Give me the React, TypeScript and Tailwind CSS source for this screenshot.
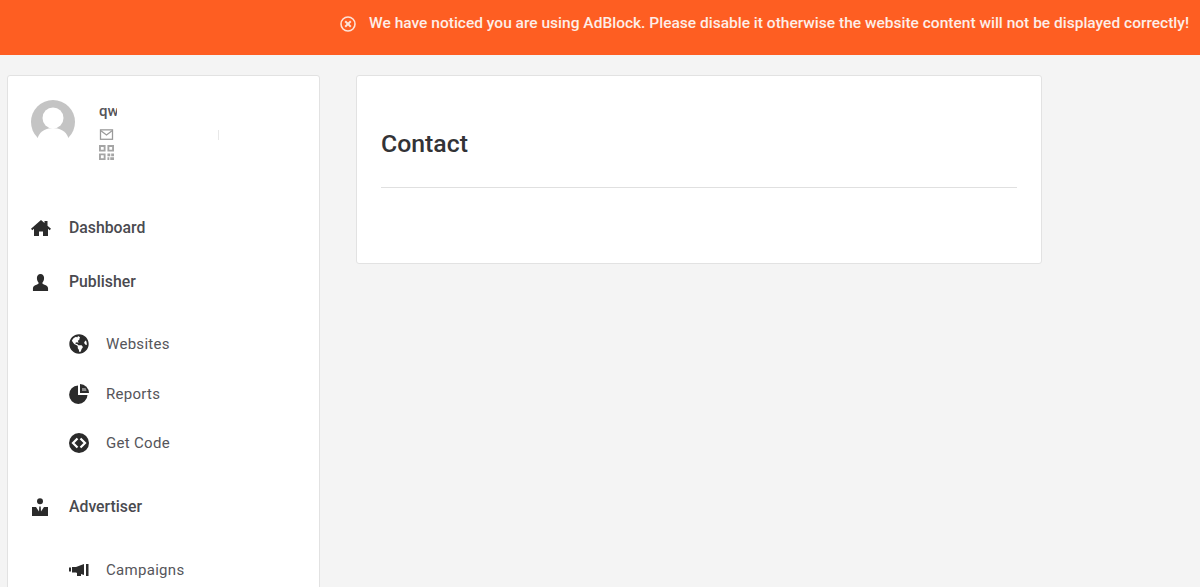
import { FaGlobeAmericas } from "react-icons/fa";

const HomeIcon = () => (
  <svg viewBox="0 0 20 16" className="h-[16px] w-[20px] text-[#2b2b2b]" fill="currentColor">
    <path d="M10 0 0 8.800l1.300 1.400L3 8.800V16h5v-4.500h4V16h5V8.800l1.700 1.400L20 8.800l-3.500-3.100V1h-3v2.100L10 0Z" />
  </svg>
);

const UserIcon = () => (
  <svg viewBox="0 0 18 18" className="h-[17px] w-[19px] text-[#2b2b2b]" fill="currentColor">
    <path d="M9 0c2.400 0 3.800 1.800 3.800 4.300 0 2-.8 3.900-1.800 5 0 1 .6 1.500 2.200 2.100 2 .8 3.800 1.700 3.800 3.600v3H1v-3c0-1.900 1.800-2.800 3.800-3.600C6.400 10.800 7 10.300 7 9.300 6 8.200 5.200 6.300 5.200 4.300 5.200 1.800 6.600 0 9 0Z" />
  </svg>
);

const AdvertiserIcon = () => (
  <svg viewBox="0 0 18 18" className="h-[18px] w-[18px] text-[#2b2b2b]" fill="currentColor">
    <circle cx="9" cy="3.200" r="3" />
    <path d="M1 9h4l3 4.500.3-5h1.400l.3 5L13 9h4v9H1V9Z" />
  </svg>
);

const PieIcon = () => (
  <svg viewBox="0 0 20 20" className="h-[20px] w-[20px] text-[#2b2b2b]" fill="currentColor">
    <path d="M9 1.500a9.200 9.200 0 1 0 9.500 9.500H9V1.500Z" />
    <path d="M11 0a9 9 0 0 1 9 9h-9V0Z" />
    <path d="M13 4h3.500a5 5 0 0 1 1 3H13V4Z" fill="#8a8a8a" />
  </svg>
);

const CodeIcon = () => (
  <svg viewBox="0 0 20 20" className="h-[20px] w-[20px] text-[#2b2b2b]">
    <circle cx="10" cy="10" r="10" fill="currentColor" />
    <path d="M8.500 5.500 4 10l4.500 4.500M11.500 5.500 16 10l-4.500 4.500" fill="none" stroke="#fff" strokeWidth="2.200" />
  </svg>
);

const BullhornIcon = () => (
  <svg viewBox="0 0 20 12" className="h-[12px] w-[20px] text-[#2b2b2b]" fill="currentColor">
    <path d="M0 3.500h2v4H0v-4ZM3 3h4l8-3v11l-3-1v2H8V9L7 8.500H3V3Z" />
    <rect x="17" y="0" width="2.500" height="12" />
  </svg>
);

const MutedMail = () => (
  <svg viewBox="0 0 16 14" className="h-[12px] w-[15px] text-[#9a9a9a]" fill="none" stroke="currentColor" strokeWidth="1.500">
    <rect x="1" y="1" width="14" height="11" />
    <path d="m1.500 2 6.500 5 6.500-5" />
  </svg>
);

const MutedQr = () => (
  <svg viewBox="0 0 16 16" className="h-[15px] w-[15px] text-[#a5a5a5]" fill="currentColor">
    <path d="M0 0h7v7H0V0Zm2 2v3h3V2H2Zm7-2h7v7H9V0Zm2 2v3h3V2h-3ZM0 9h7v7H0V9Zm2 2v3h3v-3H2Zm7-2h3v3H9V9Zm4 0h3v3h-3V9Zm-4 4h2v3H9v-3Zm3 0h4v3h-4v-3Z" />
  </svg>
);

const Avatar = () => (
  <svg viewBox="0 0 44 44" className="h-[44px] w-[44px] shrink-0">
    <circle cx="22" cy="22" r="22" fill="#c4c4c4" />
    <circle cx="22" cy="18" r="10.500" fill="#fff" />
    <path d="M7 44v-7c2-6 9-9 15-9s13 3 15 9v7H7Z" fill="#fff" />
    <rect x="0" y="38" width="44" height="6" fill="#fff" />
  </svg>
);

const NavHeading = ({ icon, label, className }: { icon: React.ReactNode; label: string; className: string }) => (
  <div className={`flex h-[20px] items-center ${className}`}>
    <span className="flex w-[38px] shrink-0 justify-start">{icon}</span>
    <span className="text-[15.8px] font-medium text-[#4a4a4f]">{label}</span>
  </div>
);

const NavItem = ({ icon, label, className }: { icon: React.ReactNode; label: string; className: string }) => (
  <div className={`flex h-[20px] items-center pl-[38px] ${className}`}>
    <span className="flex w-[37px] shrink-0 justify-start">{icon}</span>
    <span className="text-[15px] tracking-[0.3px] text-[#55555a]">{label}</span>
  </div>
);

export default function App() {
  return (
    <div className="h-[587px] overflow-hidden bg-[#f4f4f4] font-['Roboto',sans-serif]">
      <div className="flex h-[55px] items-center justify-end bg-[#fe5e22] pr-[11px] pb-[8px]">
        <svg viewBox="0 0 16 16" className="mr-[13px] h-[16px] w-[16px] text-[#fde3d8]" fill="none" stroke="currentColor" strokeWidth="1.600">
          <circle cx="8" cy="8" r="7" />
          <path d="m5.200 5.200 5.600 5.600m0-5.600-5.600 5.600" strokeWidth="2" />
        </svg>
        <span className="text-[15.53px] font-medium whitespace-nowrap text-[#fdeee8]">
          We have noticed you are using AdBlock. Please disable it otherwise the website content will not be displayed correctly!
        </span>
      </div>

      <div className="flex items-start gap-[36px] pt-[20px] pl-[7px]">
        <aside className="h-[560px] w-[313px] shrink-0 rounded-[3px] border border-[#e2e2e2] bg-white pt-[24px] pl-[23px]">
          <div className="flex">
            <Avatar />
            <div className="ml-[24px] flex flex-col items-start">
              <span className="h-[22px] w-[18px] overflow-hidden text-[15px] leading-[22px] font-medium text-[#55555a]">qw</span>
              <span className="mt-[7px]"><MutedMail /></span>
              <span className="mt-[4px]"><MutedQr /></span>
            </div>
            <span className="mt-[30px] ml-[101px] h-[10px] w-px bg-[#e8e8e8]" />
          </div>

          <NavHeading className="mt-[58px]" icon={<HomeIcon />} label="Dashboard" />
          <NavHeading className="mt-[34px]" icon={<UserIcon />} label="Publisher" />
          <NavItem className="mt-[42px]" icon={<FaGlobeAmericas className="h-[20px] w-[20px] text-[#2b2b2b]" />} label="Websites" />
          <NavItem className="mt-[30px]" icon={<PieIcon />} label="Reports" />
          <NavItem className="mt-[29px]" icon={<CodeIcon />} label="Get Code" />
          <NavHeading className="mt-[44px]" icon={<AdvertiserIcon />} label="Advertiser" />
          <NavItem className="mt-[43px]" icon={<BullhornIcon />} label="Campaigns" />
        </aside>

        <main className="h-[189px] w-[686px] rounded-[3px] border border-[#e2e2e2] bg-white px-[24px]">
          <h1 className="flex h-[112px] items-end border-b border-[#e0e0e0] pb-[28px] text-[24.8px] leading-[30px] font-medium text-[#333336]">
            Contact
          </h1>
        </main>
      </div>
    </div>
  );
}
